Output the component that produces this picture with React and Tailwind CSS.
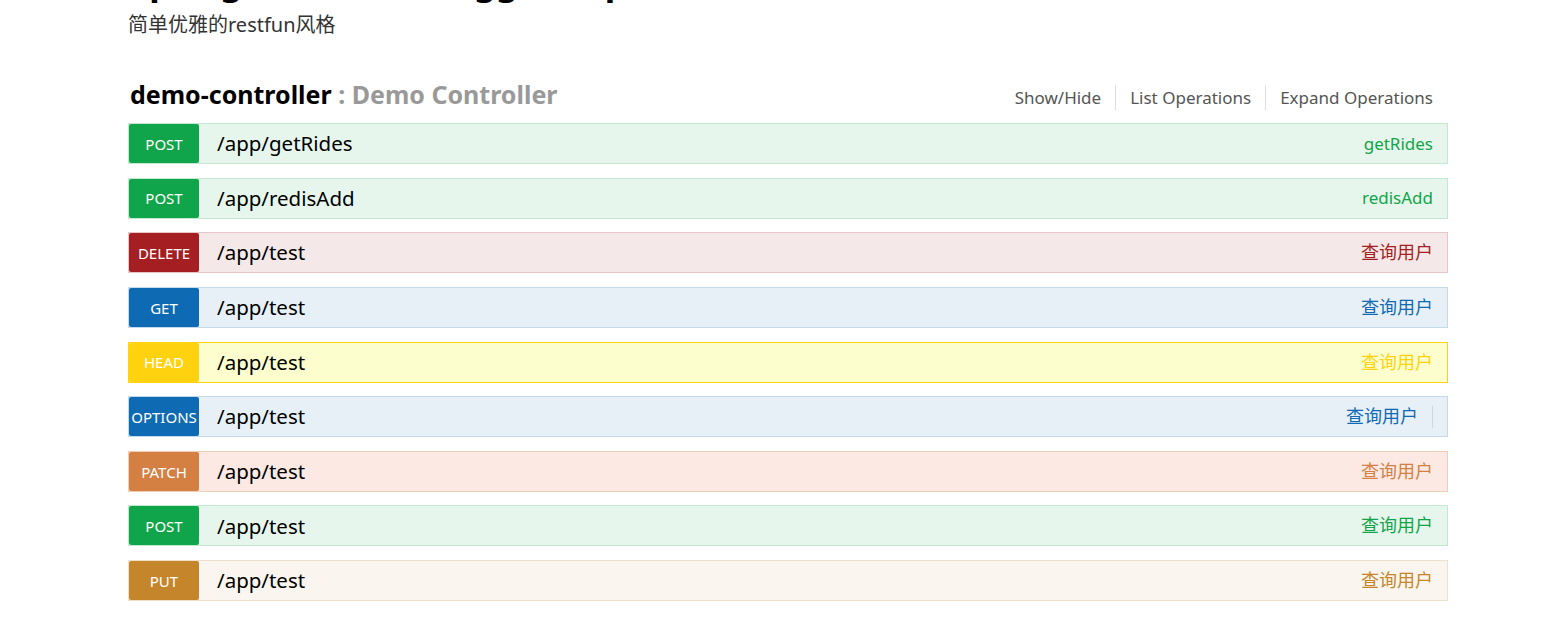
import React from 'react';

const METHODS = {
  post: { badge: 'bg-[#10a54a]', row: 'bg-[#e7f6ec] border-[#c3e8d1]', text: 'text-[#10a54a]' },
  delete: { badge: 'bg-[#a41e22]', row: 'bg-[#f5e8e8] border-[#e8c6c7]', text: 'text-[#a41e22]' },
  get: { badge: 'bg-[#0f6ab4]', row: 'bg-[#e7f0f7] border-[#c3d9ec]', text: 'text-[#0f6ab4]' },
  head: { badge: 'bg-[#ffd20f]', row: 'bg-[#fcffcd] border-[#ffd20f]', text: 'text-[#ffd20f]' },
  options: { badge: 'bg-[#0f6ab4]', row: 'bg-[#e7f0f7] border-[#c3d9ec]', text: 'text-[#0f6ab4]' },
  patch: { badge: 'bg-[#d38042]', row: 'bg-[#fce9e3] border-[#f0cdb6]', text: 'text-[#d38042]' },
  put: { badge: 'bg-[#c5862b]', row: 'bg-[#faf5ee] border-[#f0e0ca]', text: 'text-[#c5862b]' },
};

const operations = [
  { method: 'post', path: '/app/getRides', summary: 'getRides' },
  { method: 'post', path: '/app/redisAdd', summary: 'redisAdd' },
  { method: 'delete', path: '/app/test', summary: '查询用户' },
  { method: 'get', path: '/app/test', summary: '查询用户' },
  { method: 'head', path: '/app/test', summary: '查询用户' },
  { method: 'options', path: '/app/test', summary: '查询用户' },
  { method: 'patch', path: '/app/test', summary: '查询用户' },
  { method: 'post', path: '/app/test', summary: '查询用户' },
  { method: 'put', path: '/app/test', summary: '查询用户' },
];

const Operation = ({ op }) => {
  const c = METHODS[op.method];
  const cjk = op.summary === '查询用户';
  return (
    <div className={`flex items-stretch h-[41px] border ${c.row}`}>
      <span className={`w-[70px] flex items-center justify-center pt-[1px] rounded-[2px] text-white text-[15px] uppercase ${c.badge}`}>
        {op.method}
      </span>
      <span className="pl-[18px] flex items-center text-[20.5px] text-black">{op.path}</span>
      <span className={`ml-auto flex items-center pr-[14px] ${cjk ? 'text-[18px]' : 'text-[17px]'} ${c.text}`}>
        {op.summary}
        {op.method === 'options' && <span className="ml-[14px] w-px h-[22px] bg-[#c3d9ec]" />}
      </span>
    </div>
  );
};

const App = () => {
  return (
    <div
      className="w-[1551px] h-[626px] overflow-hidden bg-white"
      style={{ fontFamily: '"Noto Sans", "Open Sans", "Noto Sans CJK SC", sans-serif' }}
    >
      <div className="ml-[128px] w-[1320px]">
        <h1 className="mt-[-39px] h-[40px] pl-[2px] text-[35px] font-bold leading-[40px] text-black whitespace-nowrap">
          Spring Boot整合Swagger2 api文档
        </h1>
        <div className="mt-[12px] text-[20px] leading-[24px] text-[#333]">简单优雅的restfun风格</div>

        <div className="mt-[40px] flex items-end justify-between">
          <h2 className="pl-[2px] text-[25px] font-bold leading-[34px]">
            <span className="text-black">demo-controller</span>
            <span className="text-[#999]"> : Demo Controller</span>
          </h2>
          <div className="flex items-center pr-[15px] pb-[1px] text-[17px] text-[#555]">
            <span className="px-[14px]">Show/Hide</span>
            <span className="px-[14px] border-l border-[#ddd]">List Operations</span>
            <span className="pl-[14px] border-l border-[#ddd]">Expand Operations</span>
          </div>
        </div>

        <div className="mt-[12px] flex flex-col gap-[13.625px]">
          {operations.map((op, i) => (
            <Operation key={i} op={op} />
          ))}
        </div>
      </div>
    </div>
  );
};

export default App;
